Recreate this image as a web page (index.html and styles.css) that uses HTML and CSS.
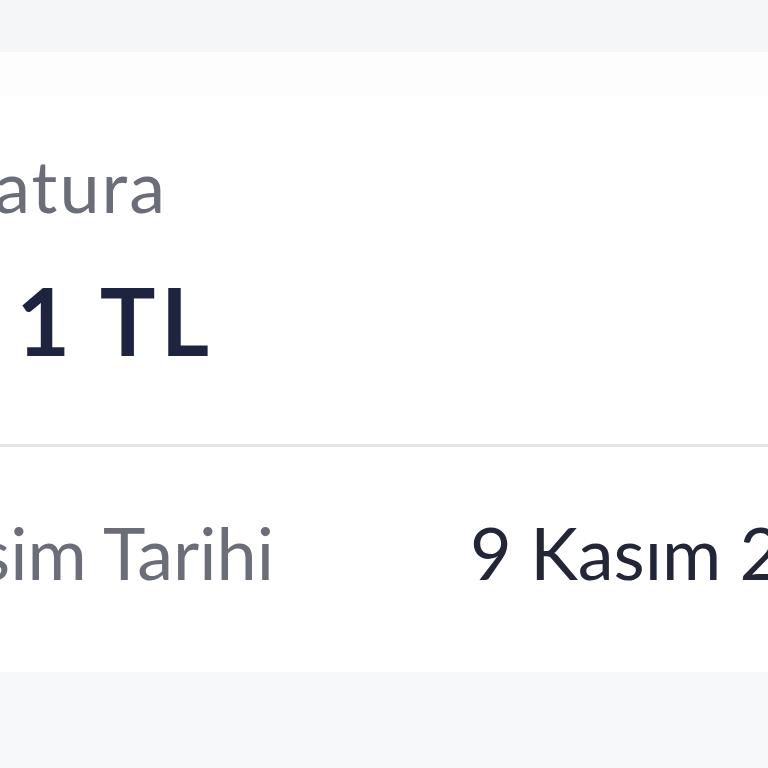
FILE: index.html
```html
<!DOCTYPE html>
<html lang="tr">
<head>
    <meta charset="UTF-8">
    <meta name="viewport" content="width=device-width, initial-scale=1.0">
    <title>Fatura</title>
    <link rel="stylesheet" href="styles.css">
</head>
<body>
    <div class="page-top"></div>
    <div class="card">
        <div class="card-strip"></div>
        <div class="card-head">
            <div class="line label-line">
                <span class="label title-label">Fatura</span>
            </div>
            <div class="line amount-line">
                <span class="amount"><span class="amount-lead">184,2</span>1 TL</span>
            </div>
        </div>
        <div class="divider"></div>
        <div class="detail-row">
            <div class="line detail-label">
                <span class="label">Kesim Tarihi</span>
            </div>
            <span class="detail-value">9 Kasım 2023</span>
        </div>
    </div>
    <div class="page-bottom"></div>
</body>
</html>
```

FILE: styles.css
```css
body {
    margin: 0;
    font-family: 'Lato', 'Open Sans', sans-serif;
    background-color: #f7f8fa;
    overflow: hidden;
    height: 768px;
}

.page-top {
    height: 52px;
    background-color: #f5f6f8;
}

.card {
    background-color: #ffffff;
    height: 620px;
}

.card-strip {
    height: 45px;
    background-color: #fdfdfd;
}

.card-head {
    padding-top: 52px;
    height: 295px;
}

/* content runs off the left edge, so lines are right-anchored */
.line {
    display: flex;
    justify-content: flex-end;
    white-space: nowrap;
}

.label {
    font-size: 72px;
    line-height: 72px;
    color: #6b6e79;
}

.title-label {
    letter-spacing: 2px;
}

.label-line {
    width: 167px;
}

.amount-line {
    width: 214px;
    margin-top: 53px;
}

.amount {
    font-size: 93px;
    line-height: 93px;
    font-weight: 700;
    letter-spacing: 5px;
    color: #1e2340;
}

.amount-lead {
    margin-right: 14px;
}

.divider {
    height: 3px;
    background-color: #e3e3e5;
}

.detail-row {
    display: flex;
    align-items: center;
    padding-top: 69px;
    white-space: nowrap;
}

.detail-label {
    width: 274px;
    flex-shrink: 0;
}

.detail-value {
    margin-left: 196px;
    font-size: 72px;
    line-height: 72px;
    color: #232637;
}

.page-bottom {
    height: 96px;
    background-color: #f7f8fa;
}
```
